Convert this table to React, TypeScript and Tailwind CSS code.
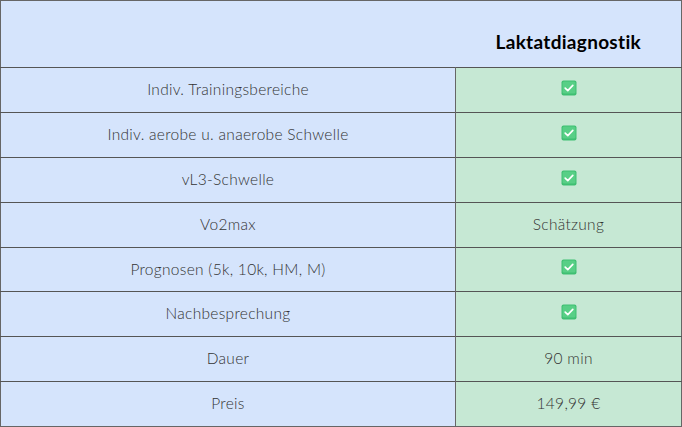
const rows: { label: string; value: string | null; h?: string }[] = [
  { label: 'Indiv. Trainingsbereiche', value: null },
  { label: 'Indiv. aerobe u. anaerobe Schwelle', value: null },
  { label: 'vL3-Schwelle', value: null },
  { label: 'Vo2max', value: 'Schätzung' },
  { label: 'Prognosen (5k, 10k, HM, M)', value: null, h: 'h-[44px]' },
  { label: 'Nachbesprechung', value: null },
  { label: 'Dauer', value: '90 min' },
  { label: 'Preis', value: '149,99 €' },
]

function CheckBox() {
  return (
    <svg width="16" height="16" viewBox="0 0 16 16" className="inline-block">
      <rect x="0.5" y="0.5" width="15" height="15" rx="2" fill="#3fbf72" />
      <rect x="1.5" y="1.5" width="13" height="12" rx="1.5" fill="#58cf86" />
      <path
        d="M4.2 8.2 L6.8 10.6 L11.8 5.4"
        fill="none"
        stroke="#fff"
        strokeWidth="1.7"
        strokeLinecap="round"
        strokeLinejoin="round"
      />
    </svg>
  )
}

export default function App() {
  return (
    <div
      className="w-[682px] h-[427px] bg-white text-[#333]"
      style={{ fontFamily: 'Lato, "Open Sans", sans-serif' }}
    >
      <table className="w-full border-collapse border border-[#666] table-fixed">
        <colgroup>
          <col className="w-[455px]" />
          <col />
        </colgroup>
        <thead>
          <tr className="h-[67px] bg-[#d5e4fc]">
            <th />
            <th className="pt-[16px] text-[19px] font-bold text-black tracking-[0.3px]">
              Laktatdiagnostik
            </th>
          </tr>
        </thead>
        <tbody>
          {rows.map((row) => (
            <tr
              key={row.label}
              className={`${row.h ?? 'h-[45px]'} border-t border-[#555]`}
            >
              <td className="bg-[#d5e4fc] text-center text-[15.5px] font-light text-[#333] tracking-[0.3px]">
                {row.label}
              </td>
              <td className="bg-[#c6e8d4] border-l border-[#666] text-center text-[15.5px] font-light tracking-[0.3px]">
                {row.value ?? (
                  <span className="inline-flex pt-[2px]">
                    <CheckBox />
                  </span>
                )}
              </td>
            </tr>
          ))}
        </tbody>
      </table>
    </div>
  )
}
